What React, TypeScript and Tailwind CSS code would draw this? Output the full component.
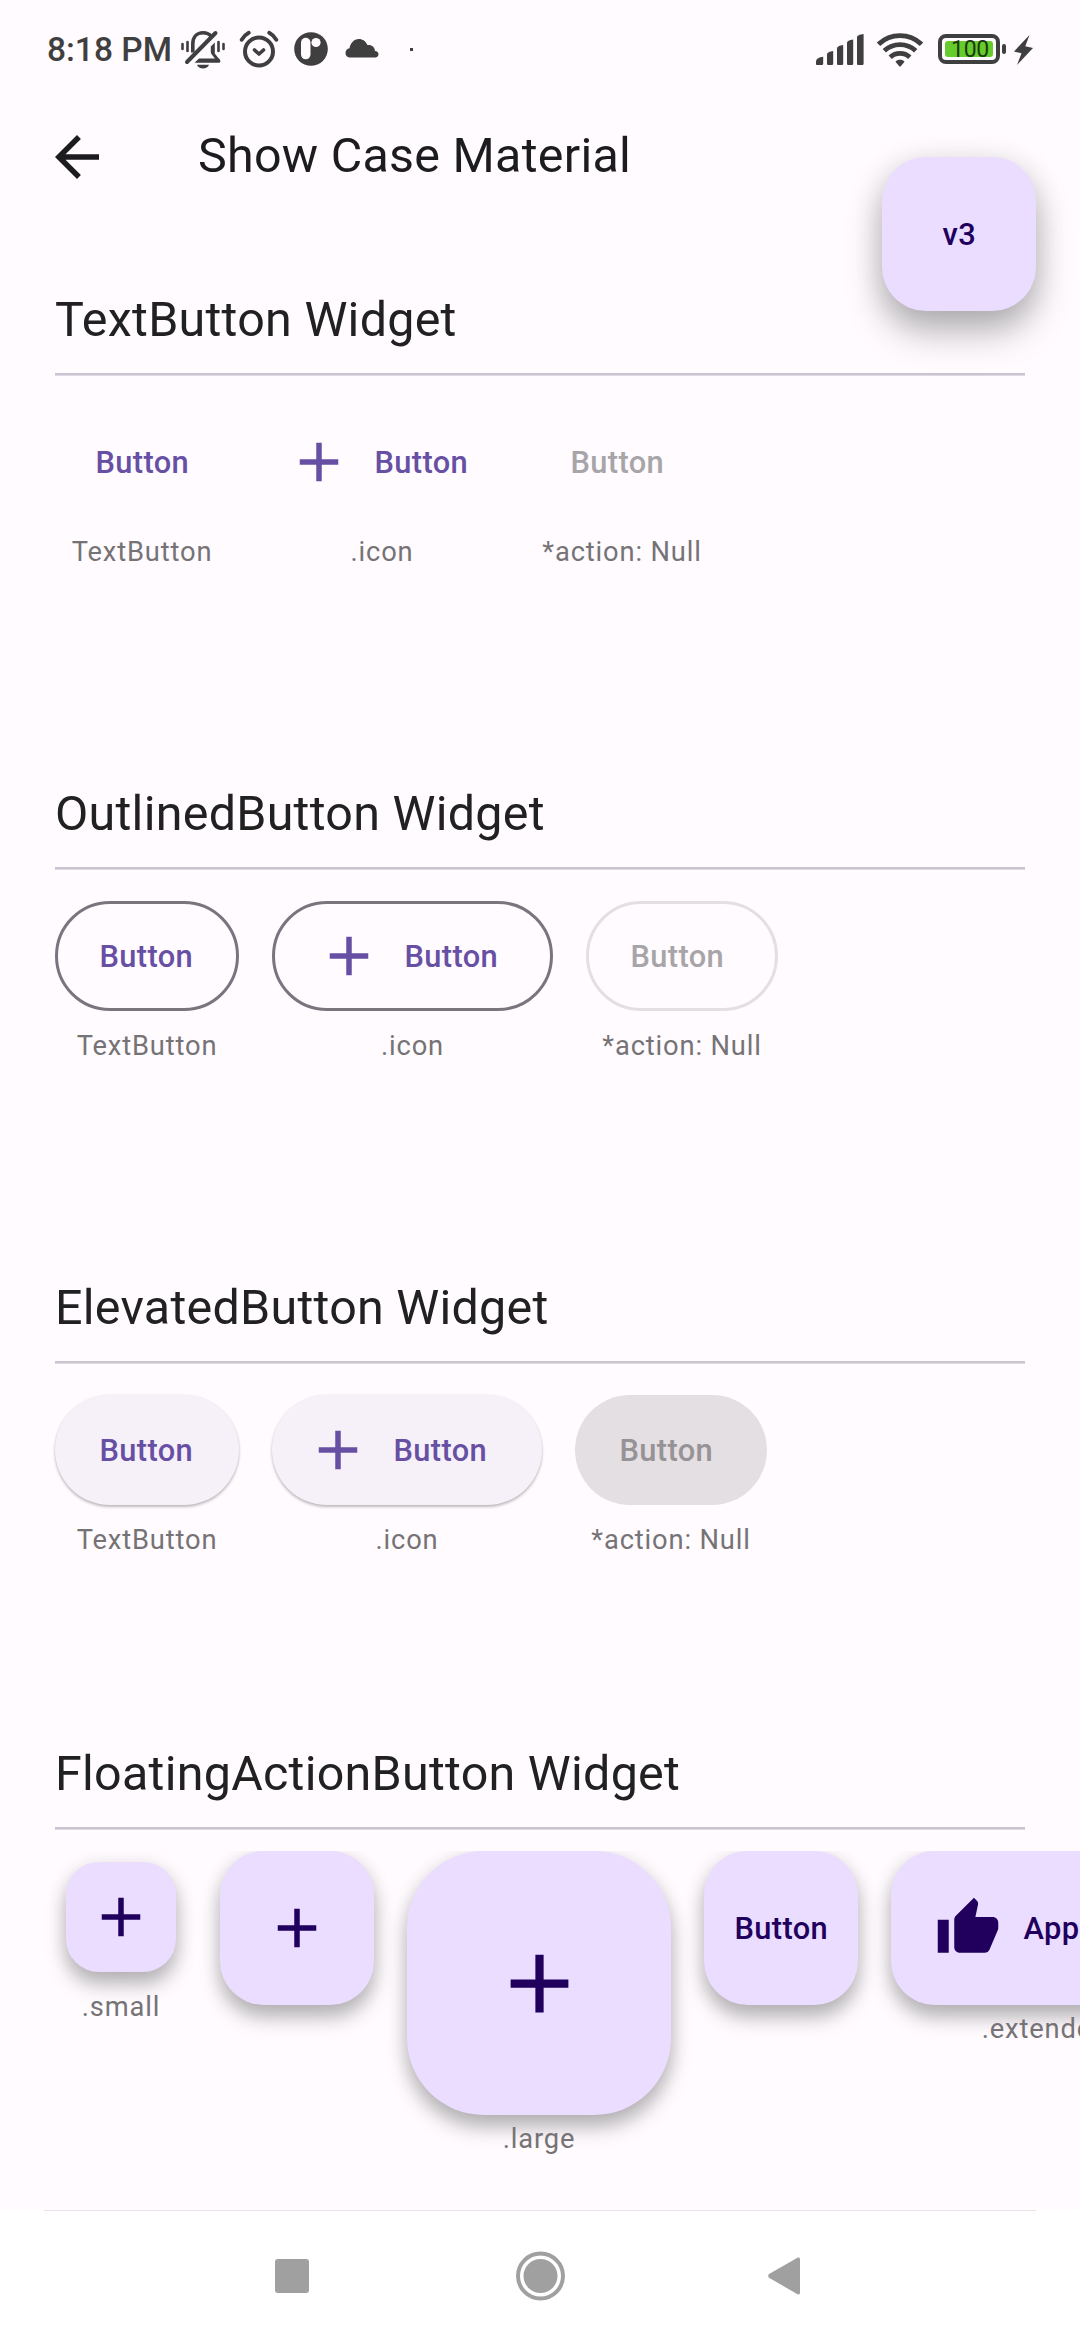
import type { ReactNode } from "react";

const ink = "#3f3f3f";

function Plus({ className }: { className: string }) {
  return (
    <svg viewBox="0 0 24 24" fill="currentColor" className={className}>
      <path d="M19 13h-6v6h-2v-6H5v-2h6V5h2v6h6v2z" />
    </svg>
  );
}

function BellMutedIcon() {
  return (
    <svg width="44" height="40" viewBox="0 0 44 40" fill="none" stroke={ink}>
      <path d="M1.500 14v5M6.500 12v9M37.500 12v9M42.500 14v5" strokeWidth="2.600" strokeLinecap="round" />
      <path d="M11.800 22.500V14C11.800 7 16 2.800 22 2.800c3.400 0 6.500 1.300 8.400 3.800" strokeWidth="3.600" />
      <path d="M29.800 16.500l4-4v11l5 6.500-3 1-5-6.500c-.8-1.200-1-2-1-3z" fill={ink} stroke="none" />
      <path d="M18 28.500L13.500 32.800h24.300c1.500 0 2-1.500 1.200-2.800l-1-1.500z" fill={ink} stroke="none" />
      <path d="M16 34.800h12c-1 2.500-3.200 3.800-6 3.800s-5-1.300-6-3.800z" fill={ink} stroke="none" />
      <path d="M34.500 3L6 32" strokeWidth="4" strokeLinecap="round" />
    </svg>
  );
}

function AlarmIcon() {
  return (
    <svg width="40" height="38" viewBox="0 0 40 38" fill="none" stroke={ink} strokeLinecap="round">
      <circle cx="20" cy="21.500" r="14" strokeWidth="4" />
      <path d="M15.500 20l4.500 4 4.500-4" strokeWidth="3.600" strokeLinejoin="round" />
      <path d="M2.700 9.800Q5.500 5 9.800 2.800M37.300 9.800Q34.500 5 30.200 2.800" strokeWidth="3.800" />
    </svg>
  );
}

function DiscIcon() {
  return (
    <svg width="34" height="34" viewBox="0 0 34 34">
      <circle cx="17" cy="17" r="16.800" fill={ink} />
      <rect x="7" y="5.800" width="9.500" height="21.500" rx="4.750" fill="#fffbff" />
      <circle cx="22" cy="10.500" r="4.600" fill="#fffbff" />
    </svg>
  );
}

function CloudIcon() {
  return (
    <svg width="34" height="20" viewBox="0 0 34 20" fill={ink}>
      <path d="M4.500 19.500A4.600 4.600 0 0 1 .5 15c0-2.600 1.600-4.500 4-4.800C5.500 5 9 1 13.800 1c4 0 7 2.300 8.600 6 4.300-.6 7.300 2 7.600 6 2.200.1 3.500 1.400 3.500 3.300 0 1.900-1.300 3.200-3.300 3.200z" />
    </svg>
  );
}

function SignalIcon() {
  return (
    <svg width="48" height="31" viewBox="0 0 48 31" fill={ink}>
      <path d="M0 30v-2.200C0 25 3 23.200 7.200 22.800V29.500c0 .9-.4 1.500-1.200 1.500H1.200C.5 31 0 30.600 0 30z" />
      <path d="M11 29.500V20.500c0-1.800 2.500-3.200 6.200-3.500v12.500c0 .9-.4 1.500-1.200 1.500h-3.800c-.8 0-1.200-.6-1.200-1.500z" />
      <path d="M21 29.500V14.500c0-1.800 2.500-3.200 6.200-3.500v18.500c0 .9-.4 1.500-1.200 1.500h-3.800c-.8 0-1.200-.6-1.200-1.500z" />
      <path d="M31 29.500V9c0-1.800 2.500-3.200 6.200-3.500v24c0 .9-.4 1.500-1.200 1.500h-3.800c-.8 0-1.200-.6-1.200-1.500z" />
      <path d="M41 29.500V3.500c0-1.800 2.500-3.200 6.600-3.500v29.500c0 .9-.4 1.500-1.200 1.500h-4.200c-.8 0-1.200-.6-1.200-1.500z" />
    </svg>
  );
}

function WifiIcon() {
  return (
    <svg width="46" height="35" viewBox="0 0 46 35" fill="none" stroke={ink} strokeWidth="4.800">
      <path d="M1.500 12.200a31 31 0 0 1 43 0" />
      <path d="M7.300 18.800a23 23 0 0 1 31.400 0" />
      <path d="M13.200 25.200a14.500 14.500 0 0 1 19.600 0" />
      <path d="M18.500 29.800c2-2.600 7-2.600 9 0L24 33.900c-.6.700-1.400.7-2 0z" fill={ink} stroke="none" />
    </svg>
  );
}

function StatusBar() {
  return (
    <div className="flex h-[98px] items-start">
      <span className="ml-[47px] mt-[30px] w-[134px] whitespace-nowrap text-[33.500px] font-medium leading-[40px] text-[#3f3f3f]">
        8:18 PM
      </span>
      <div className="mt-[30px]"><BellMutedIcon /></div>
      <div className="ml-[14px] mt-[30px]"><AlarmIcon /></div>
      <div className="ml-[15px] mt-[32px]"><DiscIcon /></div>
      <div className="ml-[17px] mt-[38px]"><CloudIcon /></div>
      <div className="ml-[31px] mt-[48px] size-[3px] bg-[#3f3f3f]" />
      <div className="ml-auto mt-[34px]"><SignalIcon /></div>
      <div className="ml-[13px] mt-[32px]"><WifiIcon /></div>
      <div className="ml-[15px] mt-[34px] flex h-[30px] w-[62px] items-center justify-center rounded-[8px] border-4 border-[#3f3f3f]">
        <div className="flex h-4 w-12 items-center justify-center rounded-[3px] bg-[#66cc2e] text-[23px] leading-4 tracking-[-0.200px] text-[#1d3a0d]">
          <span className="ml-[2px] mt-[2px]">100</span>
        </div>
      </div>
      <div className="ml-[2px] mt-[44px] h-[10px] w-[4px] rounded-[2px] bg-[#3f3f3f]" />
      <svg className="ml-[8px] mr-[47px] mt-[35px]" width="19" height="30" viewBox="0 0 19 30" fill={ink}>
        <path d="M15.500 0L0 16.500l7.500 1.800L3 30 19 13l-7.700-1.700z" />
      </svg>
    </div>
  );
}

function Section({ title, className, children }: { title: string; className: string; children: ReactNode }) {
  return (
    <section className={className}>
      <h2 className="ml-[55px] h-[64px] whitespace-nowrap text-[48.400px] leading-[66px] tracking-[0.275px] text-[#212121]">
        {title}
      </h2>
      <div className="mx-[55px] mt-[22px] h-[3px] border-b border-[#ded9e2] bg-[#cac4d0]" />
      {children}
    </section>
  );
}

function Caption({ children, className = "mt-[19px]" }: { children: ReactNode; className?: string }) {
  return (
    <span className={`block h-8 whitespace-nowrap text-[27.300px] leading-8 tracking-[0.850px] text-[#757375] ${className}`}>
      {children}
    </span>
  );
}

function Demo({ caption, className, children }: { caption: string; className: string; children: ReactNode }) {
  return (
    <div className={`flex shrink-0 flex-col items-center ${className}`}>
      {children}
      <Caption>{caption}</Caption>
    </div>
  );
}

function Label({ children }: { children: ReactNode }) {
  return <span className="ml-[0.500px] pt-[2px]">{children}</span>;
}

const pill =
  "flex h-[110px] w-full items-center whitespace-nowrap rounded-full text-[30.800px] font-medium leading-[40px] tracking-[0.350px]";
const fab =
  "flex shrink-0 items-center bg-[#eaddff] text-[30.800px] font-medium leading-[40px] tracking-[0.350px] text-[#21005d] shadow-[0_13px_20px_rgba(0,0,0,0.260),0_2px_20px_rgba(0,0,0,0.090)]";

export default function App() {
  return (
    <div className="flex h-[2340px] w-[1080px] flex-col overflow-hidden bg-[#fffbff] font-['Roboto',sans-serif]">
      <div className="relative h-[287px] shrink-0">
        <StatusBar />
        <header className="flex h-[118px] items-center">
          <svg viewBox="0 0 24 24" className="ml-[44px] size-[66px]" fill="#1c1b1f">
            <path d="M20 11H7.830l5.590-5.590L12 4l-8 8 8 8 1.410-1.410L7.830 13H20v-2z" />
          </svg>
          <h1 className="mb-[3px] ml-[88px] whitespace-nowrap text-[48.400px] leading-[64px] tracking-[0.275px] text-[#1c1b1f]">
            Show Case Material
          </h1>
        </header>
        <button className="absolute right-[44px] top-[157px] flex size-[154px] items-center justify-center rounded-[44px] bg-[#eaddff] text-[30.800px] font-medium leading-[40px] tracking-[0.275px] text-[#21005d] shadow-[0_21px_36px_rgba(0,0,0,0.280),0_3px_30px_rgba(0,0,0,0.100)]">
          <Label>v3</Label>
        </button>
      </div>

      <Section title="TextButton Widget" className="h-[494px] shrink-0">
        <div className="mt-[31px] flex pl-[61px] text-[#6750a4]">
          <Demo caption="TextButton" className="w-[162px]">
            <button className={`${pill} pl-[34px]`}>
              <Label>Button</Label>
            </button>
          </Demo>
          <Demo caption=".icon" className="ml-[30px] w-[258px]">
            <button className={`${pill} gap-[22px] pl-[33px]`}>
              <Plus className="size-[66px]" />
              <Label>Button</Label>
            </button>
          </Demo>
          <Demo caption="*action: Null" className="ml-[26px] w-[170px]">
            <button className={`${pill} pl-[33px] text-[#a7a5a7]`}>
              <Label>Button</Label>
            </button>
          </Demo>
        </div>
      </Section>

      <Section title="OutlinedButton Widget" className="h-[494px] shrink-0">
        <div className="mt-[31px] flex gap-[33px] pl-[55px] text-[#6750a4]">
          <Demo caption="TextButton" className="w-[184px]">
            <button className={`${pill} border-[3px] border-[#79747e] pl-[41px]`}>
              <Label>Button</Label>
            </button>
          </Demo>
          <Demo caption=".icon" className="w-[281px]">
            <button className={`${pill} gap-[22px] border-[3px] border-[#79747e] pl-[41px]`}>
              <Plus className="size-[66px]" />
              <Label>Button</Label>
            </button>
          </Demo>
          <Demo caption="*action: Null" className="w-[192px]">
            <button className={`${pill} border-[3px] border-[#e4dfe3] pl-[41px] text-[#a7a5a7]`}>
              <Label>Button</Label>
            </button>
          </Demo>
        </div>
      </Section>

      <Section title="ElevatedButton Widget" className="h-[466px] shrink-0">
        <div className="mt-[31px] flex gap-[33px] pl-[55px] text-[#6750a4]">
          <Demo caption="TextButton" className="w-[184px]">
            <button className={`${pill} bg-[#f6f1f9] pl-[44px] shadow-[0_2px_3px_rgba(0,0,0,0.250),0_0_3px_rgba(0,0,0,0.060)]`}>
              <Label>Button</Label>
            </button>
          </Demo>
          <Demo caption=".icon" className="w-[270px]">
            <button
              className={`${pill} gap-[22px] bg-[#f6f1f9] pl-[33px] shadow-[0_2px_3px_rgba(0,0,0,0.250),0_0_3px_rgba(0,0,0,0.060)]`}
            >
              <Plus className="size-[66px]" />
              <Label>Button</Label>
            </button>
          </Demo>
          <Demo caption="*action: Null" className="w-[192px]">
            <button className={`${pill} bg-[#e4dfe3] pl-[44px] text-[#969396]`}>
              <Label>Button</Label>
            </button>
          </Demo>
        </div>
      </Section>

      <Section title="FloatingActionButton Widget" className="h-[469px] shrink-0">
        <div className="mt-[21px] flex h-[340px] items-start gap-[33px] overflow-hidden pl-[66px]">
          <div className="mr-[11px] flex shrink-0 flex-col items-center pt-[11px]">
            <button className={`${fab} size-[110px] justify-center rounded-[33px]`}>
              <Plus className="size-[66px]" />
            </button>
            <Caption>.small</Caption>
          </div>
          <button className={`${fab} size-[154px] justify-center rounded-[44px]`}>
            <Plus className="size-[66px]" />
          </button>
          <div className="flex shrink-0 flex-col items-center">
            <button className={`${fab} size-[264px] justify-center rounded-[77px]`}>
              <Plus className="size-[99px]" />
            </button>
            <Caption className="mt-[8px]">.large</Caption>
          </div>
          <button className={`${fab} size-[154px] justify-center rounded-[44px]`}>
            <Label>Button</Label>
          </button>
          <div className="flex shrink-0 flex-col items-center">
            <button className={`${fab} h-[154px] w-[308px] rounded-[44px] pl-[44px]`}>
              <svg viewBox="0 0 24 24" fill="currentColor" className="mr-[22px] size-[66px]">
                <path d="M1 21h4V9H1v12zm22-11c0-1.100-.9-2-2-2h-6.310l.95-4.570.03-.32c0-.41-.17-.79-.44-1.060L14.170 1 7.590 7.590C7.220 7.950 7 8.450 7 9v10c0 1.100.9 2 2 2h9c.83 0 1.540-.5 1.840-1.220l3.020-7.050c.09-.23.14-.47.14-.73v-2z" />
              </svg>
              <Label>Approve</Label>
            </button>
            <Caption className="mt-[8px]">.extended</Caption>
          </div>
        </div>
      </Section>

      <nav className="flex h-[130px] shrink-0 flex-col bg-white">
        <div className="mx-[44px] h-px bg-[#e4e4e8]" />
        <div className="flex flex-1 items-center pl-[275px]">
          <div className="size-[34px] rounded-[3px] bg-[#a0a0a0]" />
          <svg className="ml-[206px]" width="50" height="50" viewBox="0 0 50 50">
            <circle cx="25.500" cy="25" r="22.500" fill="none" stroke="#a0a0a0" strokeWidth="4" />
            <circle cx="25.500" cy="25" r="17" fill="#a0a0a0" />
          </svg>
          <svg className="ml-[203px]" width="32" height="40" viewBox="0 0 32 40" fill="#a0a0a0">
            <path d="M29.500 1.800L1 18c-1 1-1 2.800 0 3.800L29.500 38.200c1.200.7 2.500 0 2.500-1.400V3.200c0-1.400-1.300-2.100-2.500-1.400z" />
          </svg>
        </div>
      </nav>
    </div>
  );
}
